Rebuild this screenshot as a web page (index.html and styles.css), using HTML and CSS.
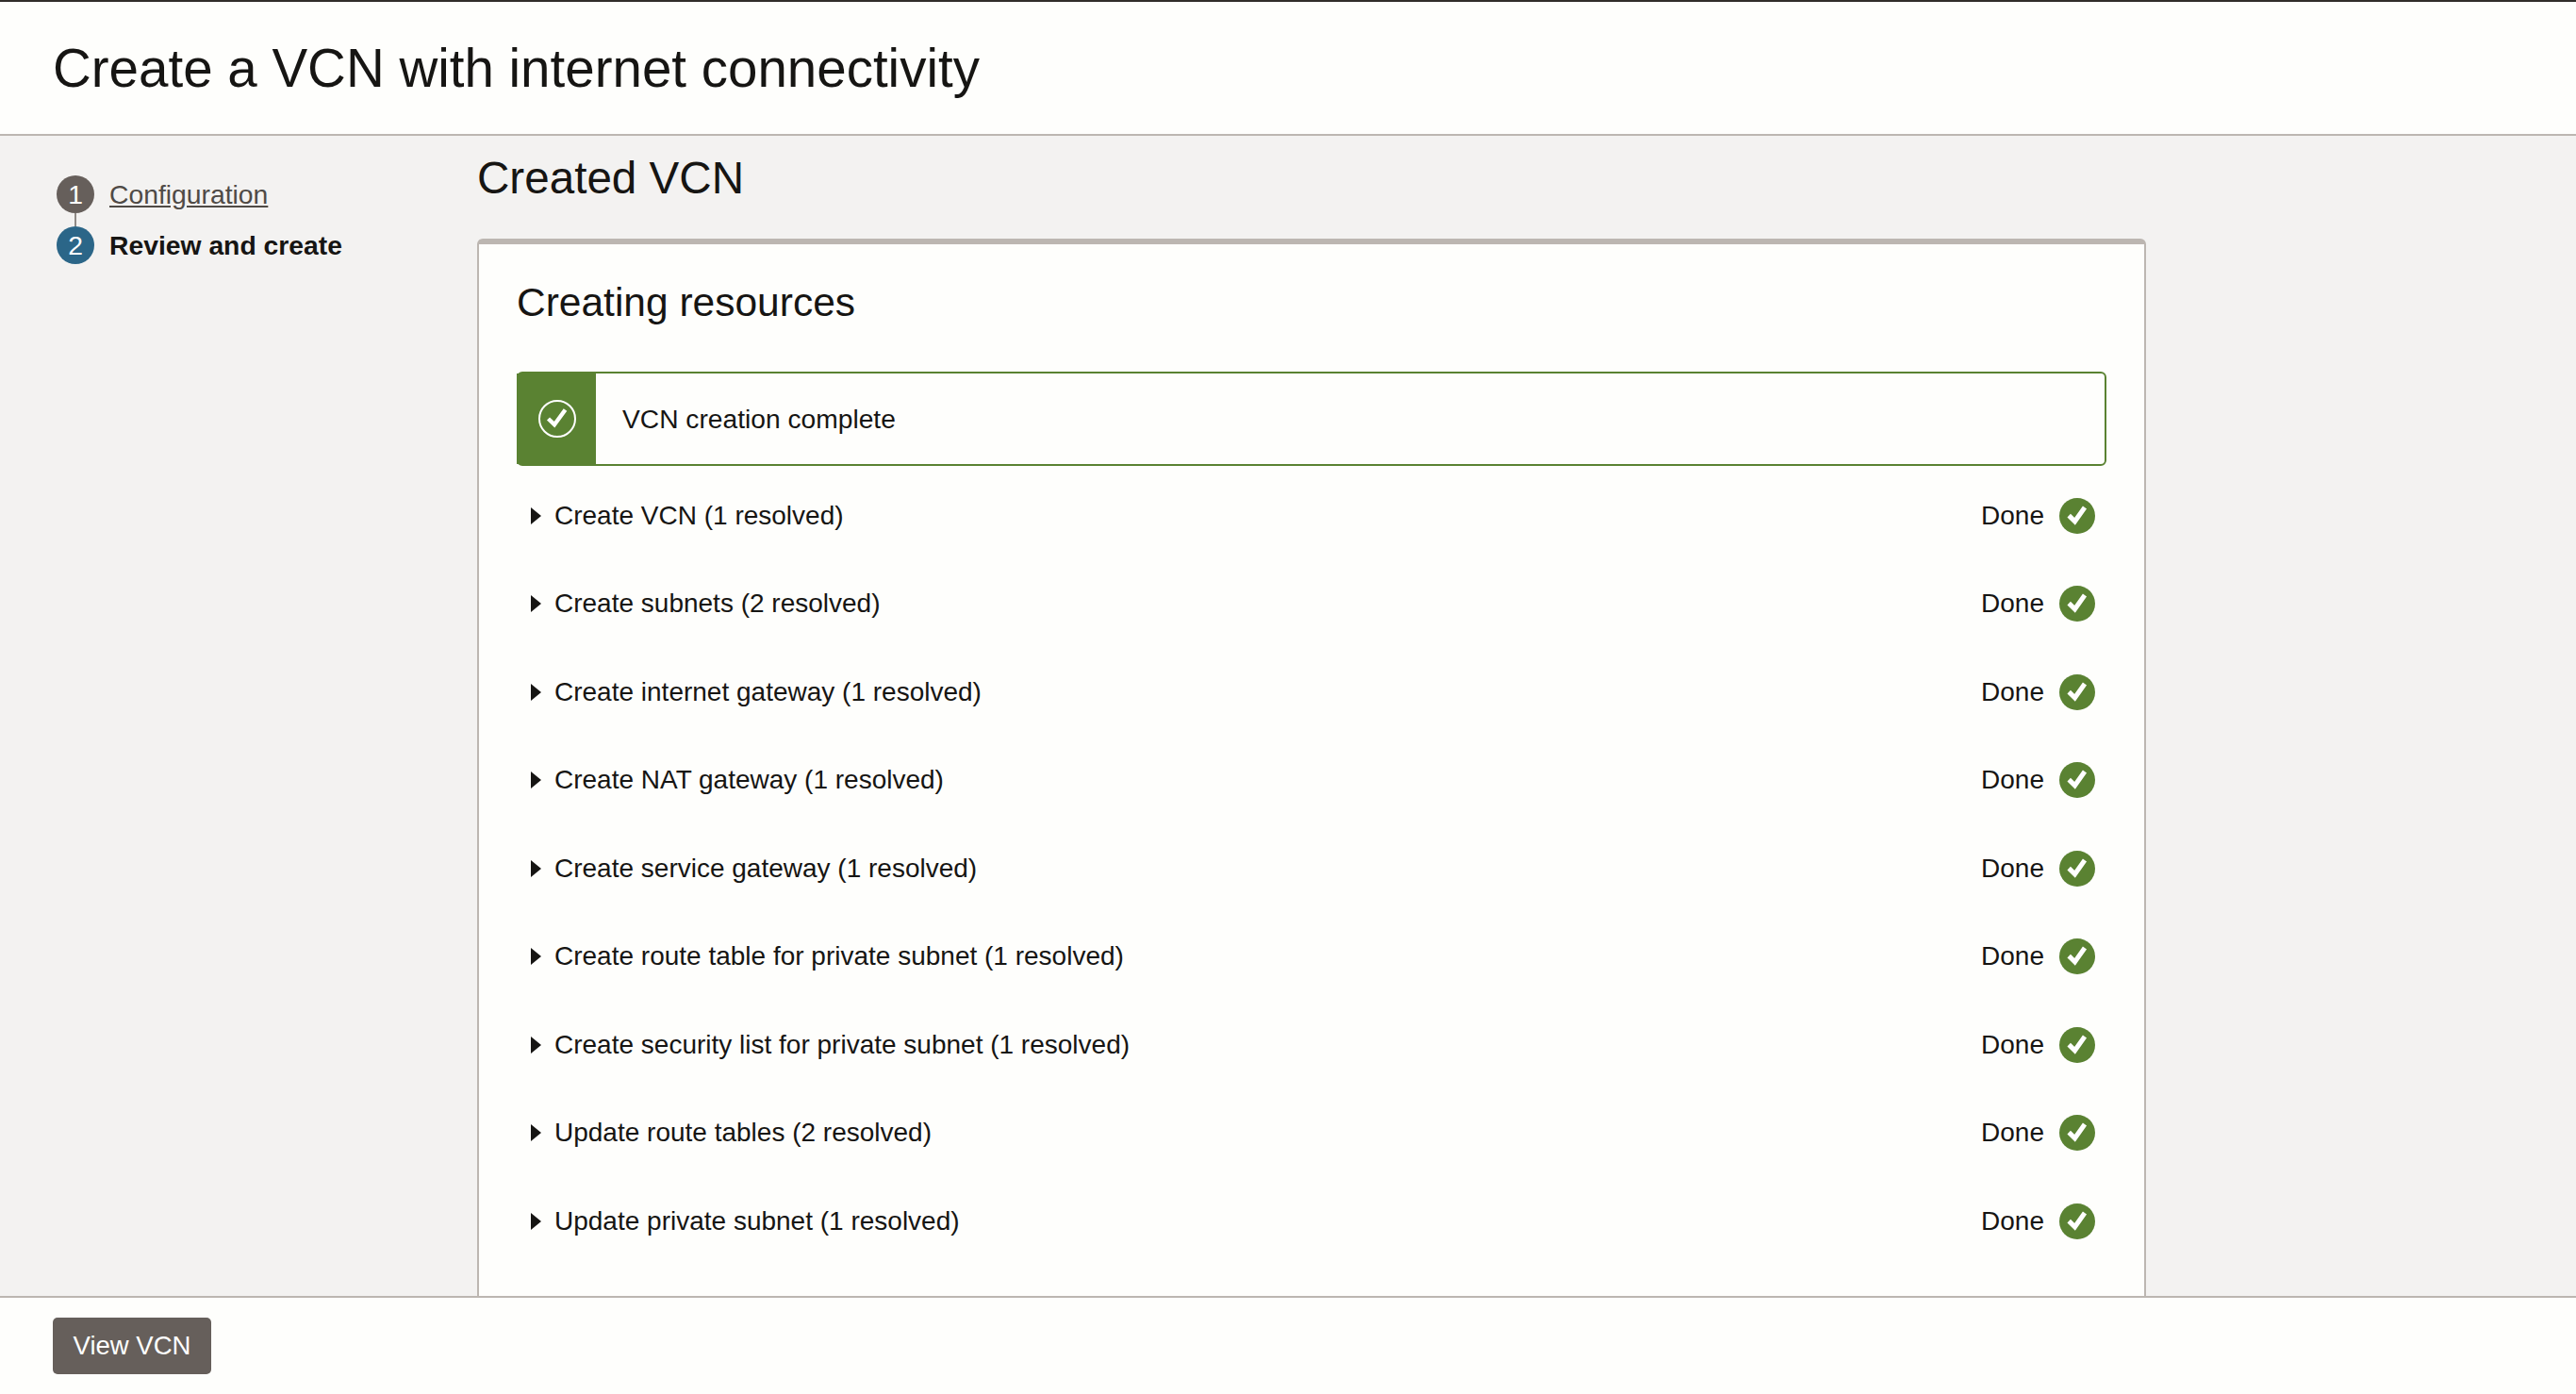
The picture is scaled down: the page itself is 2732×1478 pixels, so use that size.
FILE: index.html
```html
<!DOCTYPE html>
<html lang="en">
<head>
    <meta charset="UTF-8">
    <title>Create a VCN with internet connectivity</title>
    <link rel="stylesheet" href="styles.css">
</head>
<body>
    <svg class="defs" width="0" height="0">
        <symbol id="done" viewBox="0 0 38 38">
            <circle cx="19" cy="19" r="19" fill="#5a8232"/>
            <path d="M10.2 18.6l6.3 6.2L27 10" fill="none" stroke="#fff" stroke-width="5"/>
        </symbol>
        <symbol id="caret" viewBox="0 0 11 18">
            <path d="M0 0l11 9L0 18z" fill="#161513"/>
        </symbol>
    </svg>

    <header class="top">
        <h1>Create a VCN with internet connectivity</h1>
    </header>

    <div class="main">
        <nav class="steps">
            <div class="step">
                <span class="num num-done">1</span>
                <a href="#">Configuration</a>
            </div>
            <div class="step step-current">
                <span class="num num-current">2</span>
                <span>Review and create</span>
            </div>
        </nav>

        <section class="content">
            <h2>Created VCN</h2>
            <div class="card">
                <h3>Creating resources</h3>

                <div class="banner">
                    <div class="banner-icon">
                        <svg width="40" height="40" viewBox="0 0 40 40">
                            <circle cx="20" cy="20" r="19" fill="none" stroke="#fff" stroke-width="2"/>
                            <path d="M10.5 20l6.5 6.2L28.5 10.5" fill="none" stroke="#fff" stroke-width="4.4"/>
                        </svg>
                    </div>
                    <div class="banner-text">VCN creation complete</div>
                </div>

                <ul class="tasks">
                    <li class="task">
                        <svg class="caret" width="11" height="18"><use href="#caret"/></svg>
                        <span class="task-name">Create VCN (1 resolved)</span>
                        <span class="task-status">Done</span>
                        <svg width="38" height="38"><use href="#done"/></svg>
                    </li>
                    <li class="task">
                        <svg class="caret" width="11" height="18"><use href="#caret"/></svg>
                        <span class="task-name">Create subnets (2 resolved)</span>
                        <span class="task-status">Done</span>
                        <svg width="38" height="38"><use href="#done"/></svg>
                    </li>
                    <li class="task">
                        <svg class="caret" width="11" height="18"><use href="#caret"/></svg>
                        <span class="task-name">Create internet gateway (1 resolved)</span>
                        <span class="task-status">Done</span>
                        <svg width="38" height="38"><use href="#done"/></svg>
                    </li>
                    <li class="task">
                        <svg class="caret" width="11" height="18"><use href="#caret"/></svg>
                        <span class="task-name">Create NAT gateway (1 resolved)</span>
                        <span class="task-status">Done</span>
                        <svg width="38" height="38"><use href="#done"/></svg>
                    </li>
                    <li class="task">
                        <svg class="caret" width="11" height="18"><use href="#caret"/></svg>
                        <span class="task-name">Create service gateway (1 resolved)</span>
                        <span class="task-status">Done</span>
                        <svg width="38" height="38"><use href="#done"/></svg>
                    </li>
                    <li class="task">
                        <svg class="caret" width="11" height="18"><use href="#caret"/></svg>
                        <span class="task-name">Create route table for private subnet (1 resolved)</span>
                        <span class="task-status">Done</span>
                        <svg width="38" height="38"><use href="#done"/></svg>
                    </li>
                    <li class="task">
                        <svg class="caret" width="11" height="18"><use href="#caret"/></svg>
                        <span class="task-name">Create security list for private subnet (1 resolved)</span>
                        <span class="task-status">Done</span>
                        <svg width="38" height="38"><use href="#done"/></svg>
                    </li>
                    <li class="task">
                        <svg class="caret" width="11" height="18"><use href="#caret"/></svg>
                        <span class="task-name">Update route tables (2 resolved)</span>
                        <span class="task-status">Done</span>
                        <svg width="38" height="38"><use href="#done"/></svg>
                    </li>
                    <li class="task">
                        <svg class="caret" width="11" height="18"><use href="#caret"/></svg>
                        <span class="task-name">Update private subnet (1 resolved)</span>
                        <span class="task-status">Done</span>
                        <svg width="38" height="38"><use href="#done"/></svg>
                    </li>
                </ul>
            </div>
        </section>
    </div>

    <footer class="bottom">
        <button type="button">View VCN</button>
    </footer>
</body>
</html>
```

FILE: styles.css
```css
* { box-sizing: border-box; }
html, body { height: 100%; }
body { margin: 0; display: flex; flex-direction: column; overflow: hidden; background: #f3f2f1; color: #161513; font-family: "Liberation Sans", Arial, sans-serif; font-size: 28px; }
.defs { display: block; height: 0; }

.top { height: 144px; flex: none; padding-left: 56px; display: flex; align-items: center; background: #fefefc; border-top: 2px solid #312d2a; border-bottom: 2px solid #bcb6b1; }
h1 { margin: 0; font-size: 56.5px; font-weight: 400; }

.main { flex: 1; min-height: 0; display: flex; overflow: hidden; }
.steps { width: 506px; flex: none; padding: 42px 0 0 60px; font-size: 28.3px; }
.step { display: flex; align-items: center; gap: 16px; height: 40px; margin-bottom: 14px; position: relative; }
.step a { color: #4f4a46; }
.step-current { font-weight: 700; }
.step-current::before { content: ""; position: absolute; left: 19px; top: -14px; width: 2px; height: 14px; background: #8f8a86; }
.num { width: 40px; height: 40px; border-radius: 50%; display: flex; align-items: center; justify-content: center; color: #fff; font-weight: 400; }
.num-done { background: #665f5b; }
.num-current { background: #2b6688; }

.content { width: 1770px; flex: none; }
h2 { margin: 0; height: 109px; padding-top: 16px; font-size: 47.6px; font-weight: 400; line-height: 58px; }
.card { background: #fefefc; border: 2px solid #bcb6b1; border-top-width: 6px; border-radius: 6px 6px 0 0; padding: 0 40px; height: 1400px; }
h3 { margin: 0; height: 135px; padding-top: 37px; font-size: 42.5px; font-weight: 400; line-height: 50px; }

.banner { display: flex; height: 100px; border: 2px solid #5a8232; border-radius: 6px; }
.banner-icon { width: 84px; margin-left: -2px; padding-left: 2px; flex: none; background: #5a8232; display: flex; align-items: center; justify-content: center; }
.banner-text { padding-left: 28px; display: flex; align-items: center; font-size: 28.2px; }

.tasks { margin: 6px 0 0; padding: 0; list-style: none; }
.task { height: 93.5px; display: flex; align-items: center; padding: 0 12px 0 15px; }
.caret { margin-right: 14px; flex: none; }
.task-name { flex: 1; }
.task-status { margin-right: 16px; }

.bottom { height: 104px; flex: none; padding: 21px 0 0 56px; background: #fefefc; border-top: 2px solid #bcb6b1; }
button { width: 168px; height: 60px; padding: 0; border: none; border-radius: 5px; background: #665f5b; color: #fff; font: inherit; font-size: 27.5px; }
```
